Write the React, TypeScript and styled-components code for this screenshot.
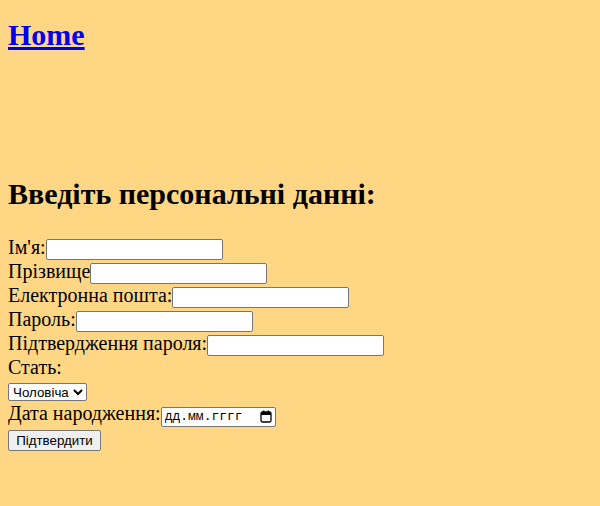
import React from "react";
import styled, { createGlobalStyle } from "styled-components";

const Global = createGlobalStyle`
  html, body { background: #ffd784; }
  body { margin: 8px; font-family: "Liberation Serif", "Times New Roman", serif; font-size: 20px; color: #000; }
`;

const Title = styled.h1`
  font-size: 30px;
  font-weight: bold;
  margin: 10px 0 0;
  a { color: #0000ee; text-decoration: underline; }
`;

const Spacer = styled.div`
  height: 100.6px;
`;

const Heading = styled.h2`
  font-size: 30px;
  font-weight: bold;
  margin: 24.9px 0;
`;

const Form = styled.form`
  font-size: 20px;
`;

const TextInput = styled.input`
  box-sizing: border-box;
  width: 177px;
  height: 21px;
  font-family: "Liberation Sans", Arial, sans-serif;
  font-size: 13.333px;
  border: 1px solid #767676;
  border-radius: 2px;
  background: #fff;
  padding: 1px 2px;
`;

const Select = styled.select`
  box-sizing: border-box;
  width: 79px;
  height: 18px;
  font-family: "Liberation Sans", Arial, sans-serif;
  font-size: 13.333px;
  color: #000;
  background: #fff;
  border: 1px solid #767676;
  border-radius: 2px;
`;

const DateField = styled.label`
  box-sizing: border-box;
  display: inline-flex;
  align-items: center;
  width: 115px;
  height: 20px;
  border: 1px solid #767676;
  border-radius: 2px;
  background: #fff;
  padding: 0 3px 0 3px;
`;

const DateText = styled.input`
  flex: 1;
  min-width: 0;
  border: none;
  outline: none;
  padding: 0;
  background: transparent;
  font-family: "Liberation Mono", "Courier New", monospace;
  font-size: 13px;
  color: #000;
  &::placeholder { color: #000; opacity: 1; }
`;

const Button = styled.button`
  box-sizing: border-box;
  width: 93px;
  height: 21px;
  font-family: "Liberation Sans", Arial, sans-serif;
  font-size: 13.333px;
  color: #000;
  background: #efefef;
  border: 1px solid #767676;
  border-radius: 2px;
  padding: 1px 6px;
`;

const CalendarIcon = () => (
  <svg width="12" height="13" viewBox="0 0 12 13" aria-hidden="true">
    <rect x="1" y="2" width="10" height="10" rx="1.5" fill="none" stroke="#000" strokeWidth="1.3" />
    <rect x="1" y="2" width="10" height="3" fill="#000" />
    <rect x="3" y="0.5" width="1.3" height="2" fill="#000" />
    <rect x="7.7" y="0.5" width="1.3" height="2" fill="#000" />
  </svg>
);

export default function App() {
  return (
    <>
      <Global />
      <Title><a href="#">Home</a></Title>
      <Spacer />
      <Heading>Введіть персональні данні:</Heading>
      <Form onSubmit={(e) => e.preventDefault()}>
        Ім'я:<TextInput type="text" /><br />
        Прізвище<TextInput type="text" /><br />
        Електронна пошта:<TextInput type="email" /><br />
        Пароль:<TextInput type="password" /><br />
        Підтвердження пароля:<TextInput type="password" /><br />
        Стать:<br />
        <Select defaultValue="m">
          <option value="m">Чоловіча</option>
          <option value="f">Жіноча</option>
        </Select><br />
        Дата народження:<DateField>
          <DateText type="text" placeholder="дд.мм.гггг" />
          <CalendarIcon />
        </DateField><br />
        <Button type="submit">Підтвердити</Button>
      </Form>
    </>
  );
}
